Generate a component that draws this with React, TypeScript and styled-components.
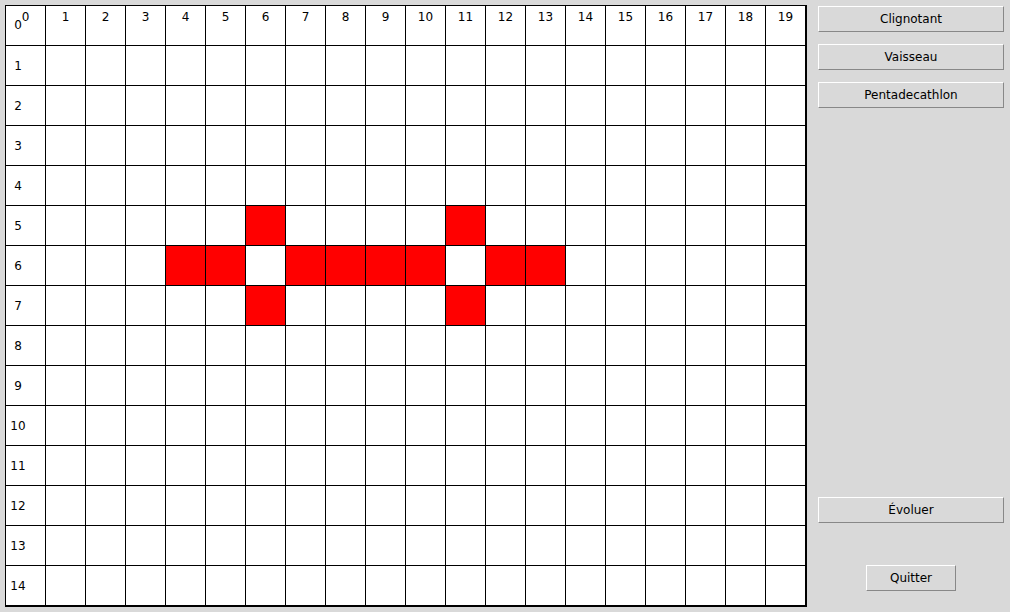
import React from "react";
import styled, { createGlobalStyle } from "styled-components";

const GlobalStyle = createGlobalStyle`
  html, body {
    margin: 0;
    padding: 0;
    background: #d9d9d9;
  }
  body {
    font-family: "DejaVu Sans", "Liberation Sans", sans-serif;
    font-size: 12px;
    color: #000;
  }
`;

const COLS = 20;
const ROWS = 15;

const alive = new Set<string>([
  "5,6", "5,11",
  "6,4", "6,5", "6,7", "6,8", "6,9", "6,10", "6,12", "6,13",
  "7,6", "7,11",
]);

const Window = styled.div`
  display: flex;
  align-items: flex-start;
  width: 1010px;
  height: 612px;
  box-sizing: border-box;
  padding: 5px 0 0 5px;
`;

const Board = styled.div`
  display: grid;
  grid-template-columns: repeat(${COLS}, 40px);
  grid-template-rows: repeat(${ROWS}, 40px);
  border: 1px solid #000;
  background: #fff;
  box-sizing: content-box;
`;

const Cell = styled.div<{ $on: boolean }>`
  position: relative;
  box-sizing: border-box;
  width: 40px;
  height: 40px;
  border-right: 1px solid #000;
  border-bottom: 1px solid #000;
  background: ${(p) => (p.$on ? "#ff0000" : "#ffffff")};
`;

const ColLabel = styled.span`
  position: absolute;
  left: 0;
  right: 0;
  top: 4px;
  text-align: center;
  line-height: 14px;
  font-size: 12px;
  color: #000;
`;

const RowLabel = styled.span`
  position: absolute;
  left: -1px;
  width: 26px;
  top: 0;
  bottom: 0;
  display: flex;
  align-items: center;
  justify-content: center;
  line-height: 14px;
  font-size: 12px;
  color: #000;
`;

const CornerRowLabel = styled(RowLabel)`
  top: 6px;
  bottom: 0;
  align-items: flex-start;
  padding-top: 6px;
  box-sizing: border-box;
`;

const Side = styled.div`
  display: flex;
  flex-direction: column;
  align-items: center;
  width: 186px;
  margin-left: 11px;
  padding-top: 1px;
`;

const Button = styled.button<{ $w?: number; $mt?: number }>`
  width: ${(p) => p.$w ?? 186}px;
  height: 26px;
  margin-top: ${(p) => p.$mt ?? 0}px;
  box-sizing: border-box;
  background: #d9d9d9;
  border: 1px solid;
  border-color: #ffffff #888888 #888888 #ffffff;
  border-radius: 0;
  font-family: "DejaVu Sans", "Liberation Sans", sans-serif;
  font-size: 12px;
  color: #000;
  padding: 0;
  line-height: 14px;
  cursor: pointer;
`;

export default function App() {
  const cells: React.ReactNode[] = [];
  for (let r = 0; r < ROWS; r++) {
    for (let c = 0; c < COLS; c++) {
      const key = `${r},${c}`;
      cells.push(
        <Cell key={key} $on={alive.has(key)}>
          {r === 0 && <ColLabel>{c}</ColLabel>}
          {c === 0 && r > 0 && <RowLabel>{r}</RowLabel>}
          {c === 0 && r === 0 && <CornerRowLabel>0</CornerRowLabel>}
        </Cell>
      );
    }
  }
  return (
    <>
      <GlobalStyle />
      <Window>
        <Board>{cells}</Board>
        <Side>
          <Button>Clignotant</Button>
          <Button $mt={12}>Vaisseau</Button>
          <Button $mt={12}>Pentadecathlon</Button>
          <Button $mt={389}>Évoluer</Button>
          <Button $w={90} $mt={42}>Quitter</Button>
        </Side>
      </Window>
    </>
  );
}
